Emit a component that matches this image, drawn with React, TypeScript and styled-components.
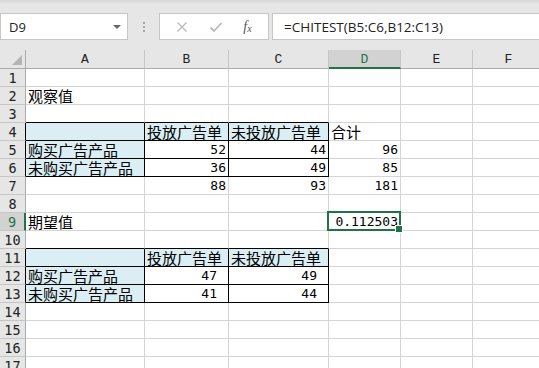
import React from 'react';
import styled, { createGlobalStyle, css } from 'styled-components';

const GREEN = '#217346';
const GRID = '#d4d4d4';

type Range = { r1: number; c1: number; r2: number; c2: number };
type CellData = { v: string; num?: boolean; fill?: boolean; pad?: number };

const TABLES: Range[] = [
  { r1: 4, c1: 1, r2: 6, c2: 3 },
  { r1: 11, c1: 1, r2: 13, c2: 3 },
];

const COLS = ['A', 'B', 'C', 'D', 'E', 'F'];
const ROWS = 17;
const SELECTED = { r: 9, c: 4 };

const DATA: Record<string, CellData> = {
  A2: { v: '观察值' },
  A4: { v: '', fill: true },
  B4: { v: '投放广告单', fill: true },
  C4: { v: '未投放广告单', fill: true },
  D4: { v: '合计' },
  A5: { v: '购买广告产品', fill: true },
  B5: { v: '52', num: true },
  C5: { v: '44', num: true },
  D5: { v: '96', num: true },
  A6: { v: '未购买广告产品', fill: true },
  B6: { v: '36', num: true },
  C6: { v: '49', num: true },
  D6: { v: '85', num: true },
  B7: { v: '88', num: true },
  C7: { v: '93', num: true },
  D7: { v: '181', num: true },
  A9: { v: '期望值' },
  D9: { v: '0.112503', num: true },
  A11: { v: '', fill: true },
  B11: { v: '投放广告单', fill: true },
  C11: { v: '未投放广告单', fill: true },
  A12: { v: '购买广告产品', fill: true },
  B12: { v: '47', num: true, pad: 11 },
  C12: { v: '49', num: true, pad: 11 },
  A13: { v: '未购买广告产品', fill: true },
  B13: { v: '41', num: true, pad: 11 },
  C13: { v: '44', num: true, pad: 11 },
};

// black edge below cell (r,c) / right of cell (r,c), c = 0 is the row header
const blackBottom = (r: number, c: number) =>
  TABLES.some((t) => r >= t.r1 - 1 && r <= t.r2 && c >= t.c1 && c <= t.c2);
const blackRight = (r: number, c: number) =>
  TABLES.some((t) => r >= t.r1 && r <= t.r2 && c >= t.c1 - 1 && c <= t.c2);

const GlobalStyle = createGlobalStyle`
  body {
    margin: 0;
    overflow: hidden;
    background: #ffffff;
  }
`;

export default function App() {
  const rows = [];
  for (let r = 1; r <= ROWS; r++) {
    const rowSel = r === SELECTED.r;
    rows.push(
      <RowHead key={`h${r}`} $active={rowSel} $black={blackRight(r, 0)}>
        {r}
      </RowHead>
    );
    COLS.forEach((col, i) => {
      const c = i + 1;
      const d = DATA[`${col}${r}`];
      const sel = rowSel && c === SELECTED.c;
      rows.push(
        <Cell
          key={`${col}${r}`}
          $num={d?.num}
          $fill={d?.fill}
          $pad={d?.pad}
          $right={blackRight(r, c) ? '#000' : GRID}
          $bottom={blackBottom(r, c) ? '#000' : GRID}
        >
          {d?.v}
          {sel && (
            <Selection>
              <Handle />
            </Selection>
          )}
        </Cell>
      );
    });
  }

  return (
    <Page>
      <GlobalStyle />
      <Toolbar>
        <NameBox>
          <span>D9</span>
          <Caret />
        </NameBox>
        <Grip>
          <i />
          <i />
          <i />
        </Grip>
        <FxBox>
          <svg width="12" height="12" viewBox="0 0 12 12">
            <path d="M1.5 1.5 L10.5 10.5 M10.5 1.5 L1.5 10.5" stroke="#b9b9b9" strokeWidth="1.3" fill="none" />
          </svg>
          <svg width="14" height="12" viewBox="0 0 14 12">
            <path d="M1.5 6.5 L5 10 L12.5 2" stroke="#b9b9b9" strokeWidth="1.8" fill="none" />
          </svg>
          <FxText>
            f<sub>x</sub>
          </FxText>
        </FxBox>
        <Formula>=CHITEST(B5:C6,B12:C13)</Formula>
      </Toolbar>
      <Sheet>
        <Corner>
          <svg width="10" height="10" viewBox="0 0 10 10">
            <path d="M10 0 L10 10 L0 10 Z" fill="#b4b4b4" />
          </svg>
        </Corner>
        {COLS.map((col, i) => (
          <ColHead key={col} $active={i + 1 === SELECTED.c}>
            {col}
          </ColHead>
        ))}
        {rows}
      </Sheet>
    </Page>
  );
}

const Page = styled.div`
  width: 539px;
  height: 368px;
  overflow: hidden;
  background: #ffffff;
`;

const Toolbar = styled.div`
  height: 50px;
  box-sizing: border-box;
  padding-top: 13px;
  display: flex;
  align-items: flex-start;
  background: linear-gradient(#d6d6d6 0, #e6e6e6 4px, #e6e6e6 100%);
  font-family: 'Open Sans', 'Noto Sans', sans-serif;
  font-size: 13px;
  color: #222;
`;

const NameBox = styled.div`
  width: 128px;
  height: 27px;
  box-sizing: border-box;
  border: 1px solid #c6c6c6;
  background: #ffffff;
  display: flex;
  align-items: center;
  justify-content: space-between;
  padding: 0 6px 0 8px;
`;

const Caret = styled.div`
  width: 0;
  height: 0;
  border-left: 4px solid transparent;
  border-right: 4px solid transparent;
  border-top: 4px solid #666;
`;

const Grip = styled.div`
  width: 31px;
  height: 27px;
  display: flex;
  flex-direction: column;
  align-items: center;
  justify-content: center;
  gap: 2px;

  i {
    width: 2px;
    height: 2px;
    background: #a8a8a8;
  }
`;

const FxBox = styled.div`
  width: 110px;
  height: 27px;
  box-sizing: border-box;
  border: 1px solid #c6c6c6;
  background: #ffffff;
  display: flex;
  align-items: center;
  justify-content: space-around;
  padding: 0 6px 0 6px;
`;

const FxText = styled.span`
  font-family: 'Liberation Serif', serif;
  font-style: italic;
  font-size: 14px;
  color: #555;

  sub {
    font-size: 10px;
    vertical-align: -1px;
  }
`;

const Formula = styled.div`
  flex: 1;
  height: 27px;
  margin-left: 3px;
  box-sizing: border-box;
  border: 1px solid #c6c6c6;
  border-right: none;
  background: #ffffff;
  display: flex;
  align-items: center;
  padding-left: 11px;
  font-size: 13.5px;
`;

const Sheet = styled.div`
  display: grid;
  grid-template-columns: 26px 119px 84px 100px 72px 72px 72px;
  grid-template-rows: 19px;
  grid-auto-rows: 18px;
`;

const headBase = css`
  box-sizing: border-box;
  background: #e6e6e6;
  display: flex;
  align-items: center;
  justify-content: center;
`;

const Corner = styled.div`
  ${headBase};
  border-right: 1px solid #ababab;
  border-bottom: 1px solid #ababab;
  align-items: flex-end;
  justify-content: flex-end;
  padding: 0 3px 3px 0;
`;

const ColHead = styled.div<{ $active?: boolean }>`
  ${headBase};
  border-right: 1px solid #c6c6c6;
  border-bottom: ${(p) => (p.$active ? `2px solid ${GREEN}` : '1px solid #ababab')};
  background: ${(p) => (p.$active ? '#d2d2d2' : '#e6e6e6')};
  color: ${(p) => (p.$active ? GREEN : '#222')};
  font-family: 'Liberation Mono', monospace;
  font-size: 13px;
  padding-top: 1px;
`;

const RowHead = styled.div<{ $active?: boolean; $black?: boolean }>`
  ${headBase};
  border-bottom: 1px solid #c6c6c6;
  border-right: ${(p) =>
    p.$active ? `2px solid ${GREEN}` : `1px solid ${p.$black ? '#000' : '#ababab'}`};
  background: ${(p) => (p.$active ? '#d2d2d2' : '#e6e6e6')};
  color: ${(p) => (p.$active ? GREEN : '#222')};
  font-family: 'DejaVu Sans Mono', monospace;
  font-size: 13.5px;
  padding-top: 1px;
`;

const Cell = styled.div<{
  $num?: boolean;
  $fill?: boolean;
  $pad?: number;
  $right: string;
  $bottom: string;
}>`
  position: relative;
  box-sizing: border-box;
  border-right: 1px solid ${(p) => p.$right};
  border-bottom: 1px solid ${(p) => p.$bottom};
  background: ${(p) => (p.$fill ? '#daeef3' : '#ffffff')};
  display: flex;
  align-items: flex-end;
  justify-content: ${(p) => (p.$num ? 'flex-end' : 'flex-start')};
  padding: ${(p) => (p.$num ? `0 ${p.$pad ?? 2}px 0 0` : '0 0 0 2px')};
  white-space: nowrap;
  overflow: visible;
  color: #000;
  font-family: ${(p) =>
    p.$num ? "'DejaVu Sans Mono', monospace" : "'Noto Sans CJK SC', sans-serif"};
  font-size: ${(p) => (p.$num ? '13px' : '15px')};
  line-height: 17px;
`;

const Selection = styled.div`
  position: absolute;
  top: -2px;
  left: -2px;
  right: -1px;
  bottom: -1px;
  border: 2px solid ${GREEN};
  z-index: 2;
`;

const Handle = styled.div`
  position: absolute;
  right: -4px;
  bottom: -4px;
  width: 6px;
  height: 6px;
  background: ${GREEN};
  border: 1px solid #ffffff;
`;
